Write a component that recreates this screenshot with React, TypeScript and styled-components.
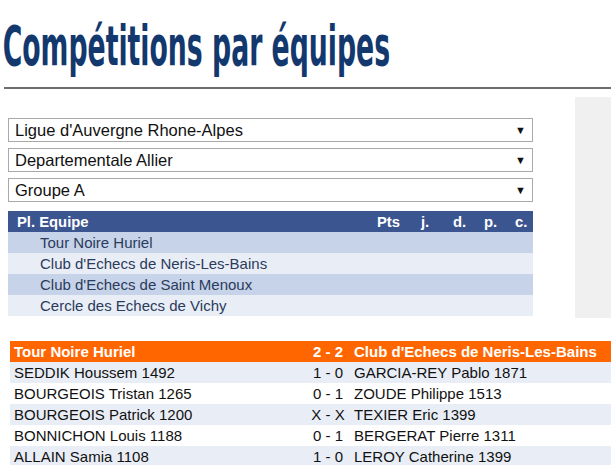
import styled, { createGlobalStyle } from "styled-components";

const GlobalStyle = createGlobalStyle`
  html, body {
    margin: 0;
    padding: 0;
    background: #fff;
    font-family: "Liberation Sans", Arial, sans-serif;
    overflow: hidden;
  }
`;

const Page = styled.div`
  width: 611px;
  height: 465px;
  overflow: hidden;
`;

const Title = styled.h1`
  margin: 0;
  padding: 18px 0 0 5px;
  height: 70px;
  box-sizing: border-box;
  font-family: "DejaVu Sans Condensed", "Liberation Sans Narrow", sans-serif;
  font-weight: bold;
  font-size: 56px;
  line-height: 56px;
  color: #12386e;
  white-space: nowrap;
  transform-origin: left top;
  transform: scaleX(0.53);
`;

const Rule = styled.hr`
  margin: 17px 0 0 4px;
  border: 0;
  border-top: 2px solid #6d6d6d;
  height: 0;
`;

const Body = styled.div`
  display: flex;
  padding-top: 8px;
`;

const Main = styled.div`
  width: 525px;
  margin: 21px 0 0 8px;
  display: flex;
  flex-direction: column;
`;

const Side = styled.div`
  margin-left: 42px;
  width: 36px;
  height: 221px;
  background: #f0f0f0;
`;

const Select = styled.div`
  height: 24px;
  box-sizing: border-box;
  border: 1px solid #a9a9a9;
  display: flex;
  align-items: center;
  justify-content: space-between;
  padding: 0 6px 0 6px;
  font-size: 16.5px;
  color: #111;
  & + & {
    margin-top: 6px;
  }
`;

const Arrow = styled.span`
  font-size: 11px;
  color: #111;
`;

const Standings = styled.div`
  margin-top: 9px;
`;

const StandHead = styled.div`
  display: grid;
  grid-template-columns: 360px 44px 32px 31px 31px 1fr;
  height: 21px;
  align-items: center;
  background: #3a5590;
  color: #fff;
  font-weight: bold;
  font-size: 14.8px;
  padding-left: 9px;
`;

const StandRow = styled.div<{ $dark: boolean }>`
  height: 21px;
  display: flex;
  align-items: center;
  padding-left: 32px;
  background: ${(p) => (p.$dark ? "#c6d3e8" : "#e9eef6")};
  color: #2b3b5c;
  font-size: 15px;
`;

const Col = styled.span``;

const Match = styled.div`
  margin: 23px 0 0 10px;
  width: 601px;
`;

const MatchRow = styled.div<{ $bg: string; $head?: boolean }>`
  display: grid;
  grid-template-columns: 294px 48px 1fr;
  height: 21px;
  align-items: center;
  background: ${(p) => p.$bg};
  color: ${(p) => (p.$head ? "#fff" : "#111")};
  font-weight: ${(p) => (p.$head ? "bold" : "normal")};
  font-size: 15px;
  white-space: nowrap;
`;

const Cell = styled.span<{ $center?: boolean; $right?: boolean }>`
  padding-left: ${(p) => (p.$center ? "0" : p.$right ? "2px" : "4px")};
  text-align: ${(p) => (p.$center ? "center" : "left")};
`;

const selects = ["Ligue d'Auvergne Rhone-Alpes", "Departementale Allier", "Groupe A"];
const teams = [
  "Tour Noire Huriel",
  "Club d'Echecs de Neris-Les-Bains",
  "Club d'Echecs de Saint Menoux",
  "Cercle des Echecs de Vichy",
];
const games = [
  ["SEDDIK Houssem 1492", "1 - 0", "GARCIA-REY Pablo 1871"],
  ["BOURGEOIS Tristan 1265", "0 - 1", "ZOUDE Philippe 1513"],
  ["BOURGEOIS Patrick 1200", "X - X", "TEXIER Eric 1399"],
  ["BONNICHON Louis 1188", "0 - 1", "BERGERAT Pierre 1311"],
  ["ALLAIN Samia 1108", "1 - 0", "LEROY Catherine 1399"],
];

export default function App() {
  return (
    <Page>
      <GlobalStyle />
      <Title>Compétitions par équipes</Title>
      <Rule />
      <Body>
        <Main>
          {selects.map((s) => (
            <Select key={s}>
              {s}
              <Arrow>▼</Arrow>
            </Select>
          ))}
          <Standings>
            <StandHead>
              <Col>Pl. Equipe</Col>
              <Col>Pts</Col>
              <Col>j.</Col>
              <Col>d.</Col>
              <Col>p.</Col>
              <Col>c.</Col>
            </StandHead>
            {teams.map((t, i) => (
              <StandRow key={t} $dark={i % 2 === 0}>
                {t}
              </StandRow>
            ))}
          </Standings>
        </Main>
        <Side />
      </Body>
      <Match>
        <MatchRow $bg="#ff6600" $head>
          <Cell>Tour Noire Huriel</Cell>
          <Cell $center>2 - 2</Cell>
          <Cell $right>Club d'Echecs de Neris-Les-Bains</Cell>
        </MatchRow>
        {games.map((g, i) => (
          <MatchRow key={g[0]} $bg={i % 2 === 0 ? "#e9eef6" : "#fff"}>
            <Cell>{g[0]}</Cell>
            <Cell $center>{g[1]}</Cell>
            <Cell $right>{g[2]}</Cell>
          </MatchRow>
        ))}
      </Match>
    </Page>
  );
}
